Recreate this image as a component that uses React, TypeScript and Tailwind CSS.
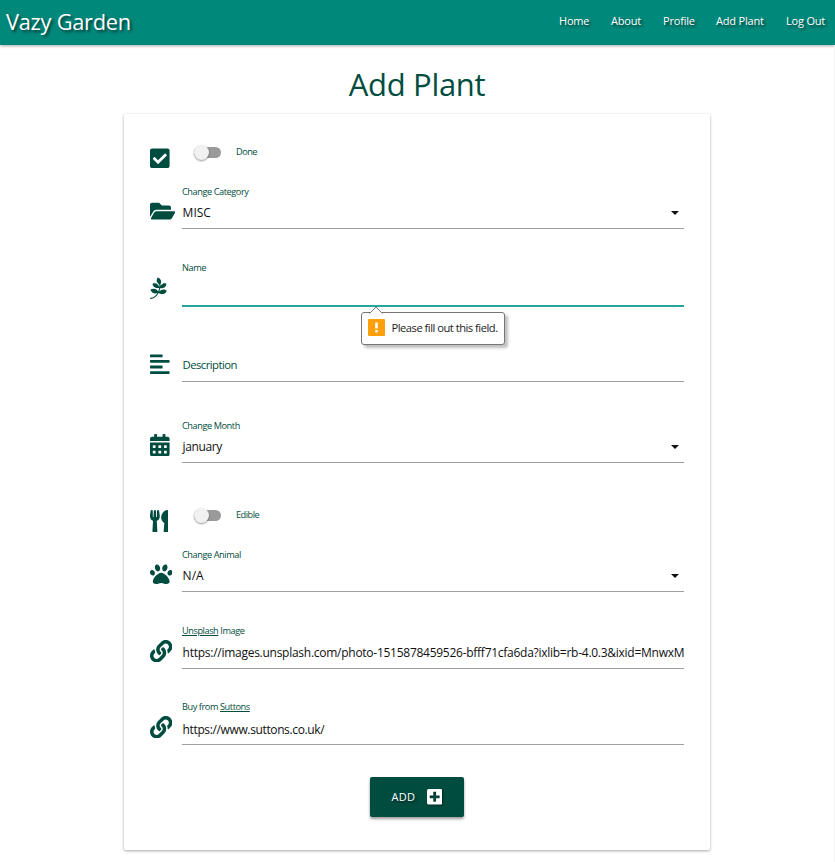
import type { ReactNode } from "react";
import type { IconType } from "react-icons";
import {
  FaAlignLeft,
  FaCalendarAlt,
  FaCheckSquare,
  FaFolderOpen,
  FaLink,
  FaPagelines,
  FaPaw,
  FaPlusSquare,
  FaUtensils,
} from "react-icons/fa";

const links = [
  { text: "Home", cls: "w-[30px]" },
  { text: "About", cls: "w-[30px]" },
  { text: "Profile", cls: "w-[31px]" },
  { text: "Add Plant", cls: "w-[48px]" },
  { text: "Log Out", cls: "w-[39px]" },
];

function IconCell({ icon: Icon, size }: { icon: IconType; size: string }) {
  return (
    <div className="flex w-[32px] shrink-0 items-center">
      <Icon className={`shrink-0 text-[#004d40] ${size}`} />
    </div>
  );
}

type FieldProps = {
  icon: IconType;
  size: string;
  label?: ReactNode;
  value?: string;
  valueClass?: string;
  lineClass?: string;
  className: string;
  select?: boolean;
};

function Field({ icon, size, label, value, valueClass = "pt-px text-[12px] tracking-[-0.4px] text-[#101010]", lineClass = "h-px bg-[#9e9e9e]", className, select }: FieldProps) {
  return (
    <div className={`flex h-[46px] ${className}`}>
      <div className="flex h-[34px] pt-[22px]">
        <div className="flex h-[12px] items-center">
          <IconCell icon={icon} size={size} />
        </div>
      </div>
      <div className="flex min-w-0 flex-1 flex-col">
        <div className={`h-4 text-[9.2px] tracking-[-0.43px] whitespace-nowrap text-[#004d40] ${select ? "leading-[18px]" : "leading-4"}`}>{label}</div>
        <div className="mb-[2px] flex h-[27px] shrink-0 items-center justify-between">
          <span className={`ml-[0.6px] whitespace-nowrap ${valueClass}`}>{value}</span>
          {select && (
            <svg className="mt-px mr-[5px] h-[4px] w-[8px] shrink-0" viewBox="0 0 8 4">
              <path d="M0 0h8L4 4z" fill="#111" />
            </svg>
          )}
        </div>
        <div className={`shrink-0 ${lineClass}`} />
      </div>
    </div>
  );
}

function SwitchRow({ icon, size, label, className }: { icon: IconType; size: string; label: string; className: string }) {
  return (
    <div className={`flex h-[38px] items-center ${className}`}>
      <IconCell icon={icon} size={size} />
      <div className="mb-[12px] ml-[12px] flex items-center">
        <div className="flex h-[11px] w-[27px] items-center rounded-full bg-[#9a9a9a]">
          <div className="h-[15px] w-[15px] shrink-0 rounded-full bg-[#f1f1f1] shadow-[0_1px_2px_rgba(0,0,0,0.4)]" />
        </div>
        <span className="ml-[15px] text-[9.2px] leading-4 tracking-[-0.5px] text-[#004d40]">{label}</span>
      </div>
    </div>
  );
}

export default function App() {
  return (
    <div className="h-[862px] overflow-hidden bg-white font-['Open_Sans','Noto_Sans',sans-serif]">
      <header className="flex h-[45px] items-center justify-between bg-[#00897b] pr-[10px] pb-[2px] pl-[6px] text-white shadow-[0_1px_3px_rgba(0,0,0,0.35)]">
        <a className="pt-px text-[21.8px] tracking-[-0.25px] [text-shadow:2px_2px_3px_rgba(0,0,0,0.6)]">Vazy Garden</a>
        <nav className="flex gap-[22px] text-[11px] tracking-[-0.2px] [text-shadow:2px_2px_3px_rgba(0,0,0,0.6)]">
          {links.map((l) => (
            <a key={l.text} className={`whitespace-nowrap ${l.cls}`}>
              {l.text}
            </a>
          ))}
        </nav>
      </header>
      <main className="flex h-[817px] flex-col items-center border-r border-[#f3f3f3]">
        <h1 className="mt-[19px] h-[50px] text-[31px] leading-[40px] tracking-[-0.3px] text-[#004d40]">Add Plant</h1>
        <form className="h-[736px] w-[586px] shrink-0 rounded-[2px] bg-white pt-[25px] pr-[26px] pl-[26px] shadow-[0_1px_3px_rgba(0,0,0,0.35)]">
          <SwitchRow icon={FaCheckSquare} size="h-[22.4px] w-[19.6px]" label="Done" className="" />
          <Field icon={FaFolderOpen} size="h-[22.4px] w-[25.2px]" label="Change Category" value="MISC" valueClass="pt-px text-[12px] text-[#101010]" className="mt-[6px]" select />
          <div className="relative">
            <Field icon={FaPagelines} size="h-[22.4px] w-[16.8px]" label="Name" lineClass="h-[2px] bg-[#26a69a]" className="mt-[31px]" />
            <div className="absolute top-[52px] left-[211px] flex h-[33px] w-[144px] items-center rounded-[3px] border border-[#767676] bg-white pl-[6px] shadow-[3px_3px_3px_rgba(0,0,0,0.25)]">
              <svg className="absolute -top-[7px] left-[7px] h-[8px] w-[14px]" viewBox="0 0 14 8">
                <path d="M0.5 7.5L7 1l6.5 6.5V8H0.5z" fill="#fff" />
                <path d="M0.5 7.5L7 1l6.5 6.5" fill="none" stroke="#767676" />
              </svg>
              <svg className="mb-[2px] h-[17px] w-[17px] shrink-0" viewBox="0 0 17 17">
                <rect width="17" height="17" rx="1" fill="#ff9f0a" />
                <path d="M7.2 3.5h2.6v6H7.2zM7.2 11h2.6v2.4H7.2z" fill="#fff" />
              </svg>
              <span className="ml-[6.5px] text-[11.2px] tracking-[-0.5px] whitespace-nowrap text-[#222]">Please fill out this field.</span>
            </div>
          </div>
          <Field icon={FaAlignLeft} size="h-[22.4px] w-[19.6px]" value="Description" valueClass="text-[11.3px] tracking-[-0.55px] text-[#004d40]" className="mt-[30px]" />
          <Field icon={FaCalendarAlt} size="h-[22.4px] w-[19.6px]" label="Change Month" value="january" className="mt-[35px]" select />
          <SwitchRow icon={FaUtensils} size="h-[22.4px] w-[18.2px]" label="Edible" className="mt-[39px]" />
          <Field icon={FaPaw} size="h-[22.4px] w-[22.4px]" label="Change Animal" value="N/A" valueClass="pt-px text-[12px] text-[#101010]" className="mt-[6px]" select />
          <Field
            icon={FaLink}
            size="h-[22.4px] w-[22.4px]"
            label={<><a className="underline">Unsplash</a> Image</>}
            value="https://images.unsplash.com/photo-1515878459526-bfff71cfa6da?ixlib=rb-4.0.3&ixid=MnwxM"
            valueClass="text-[12px] tracking-[-0.265px] text-[#101010]"
            className="mt-[31px]"
          />
          <Field
            icon={FaLink}
            size="h-[22.4px] w-[22.4px]"
            label={<>Buy from <a className="underline">Suttons</a></>}
            value="https://www.suttons.co.uk/"
            valueClass="pt-[3px] text-[12px] tracking-[-0.37px] text-[#101010]"
            className="mt-[30px]"
          />
          <button
            type="button"
            className="mt-[32px] ml-[220px] flex h-[40px] w-[94px] items-center rounded-[2px] bg-[#004d40] pl-[21.5px] text-[11px] text-white shadow-[0_2px_3px_rgba(0,0,0,0.4)] [text-shadow:2px_2px_3px_rgba(0,0,0,0.6)]"
          >
            <span className="w-[35.5px] text-left tracking-[0.3px]">ADD</span>
            <FaPlusSquare className="h-[17.6px] w-[15.4px] drop-shadow-[1px_1px_1px_rgba(0,0,0,0.5)]" />
          </button>
        </form>
      </main>
    </div>
  );
}
